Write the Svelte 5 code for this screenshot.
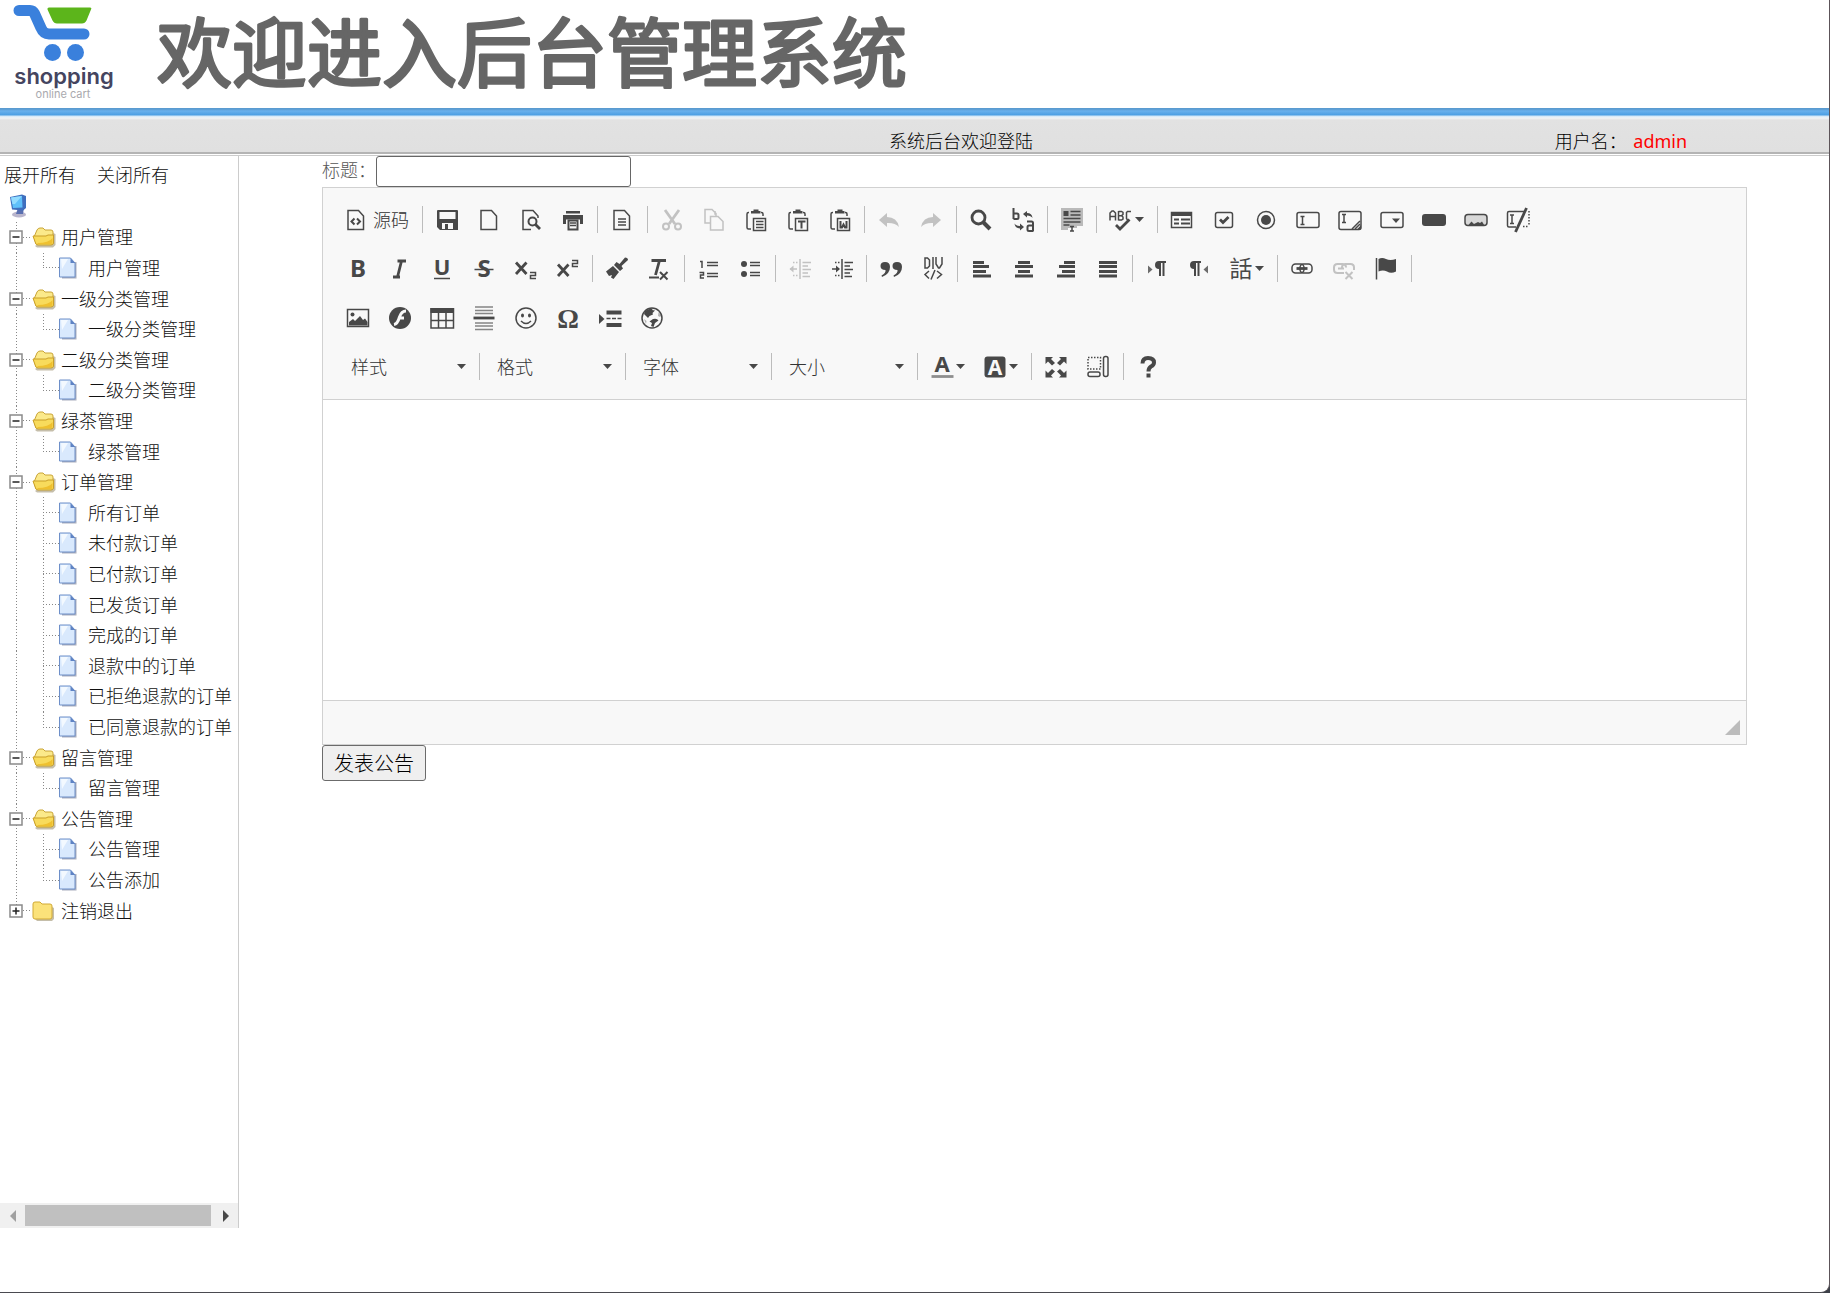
<script lang="ts">
  type Leaf = string;
  let groups = $state([
    { name: '用户管理', open: true, items: ['用户管理'] as Leaf[] },
    { name: '一级分类管理', open: true, items: ['一级分类管理'] },
    { name: '二级分类管理', open: true, items: ['二级分类管理'] },
    { name: '绿茶管理', open: true, items: ['绿茶管理'] },
    {
      name: '订单管理',
      open: true,
      items: ['所有订单', '未付款订单', '已付款订单', '已发货订单', '完成的订单', '退款中的订单', '已拒绝退款的订单', '已同意退款的订单']
    },
    { name: '留言管理', open: true, items: ['留言管理'] },
    { name: '公告管理', open: true, items: ['公告管理', '公告添加'] },
    { name: '注销退出', open: false, items: [] as Leaf[] }
  ]);

  function setAll(open: boolean) {
    groups.forEach((g) => (g.open = open));
  }

  // "-" separates buttons, "|" separates groups, "*" marks a disabled button, "+" one with a menu
  const rows = [
    'source - save newpage preview print - templates | *cut *copy paste pastetext pasteword - *undo *redo | find replace - selectall - +spell | form checkbox radio textfield textarea select button imagebutton hidden',
    'bold italic underline strike sub sup - brush removeformat | ol ul - *outdent indent - quote div - left center right justify - ltr rtl +language | link *unlink anchor |',
    'image flash table hr smiley omega pagebreak iframe'
  ].map((r) => r.split(' '));

  const combos = ['样式', '格式', '字体', '大小'];
  const lastRow = '+textcolor +bgcolor | maximize blocks | about'.split(' ');

  const labels: Record<string, string> = {
    save: '保存', newpage: '新建', preview: '预览', print: '打印', templates: '模板', cut: '剪切', copy: '复制',
    paste: '粘贴', pastetext: '粘贴为无格式文本', pasteword: '从 MS Word 粘贴', undo: '撤消', redo: '重做', find: '查找',
    replace: '替换', selectall: '全选', spell: '拼写检查', form: '表单', checkbox: '复选框', radio: '单选按钮',
    textfield: '单行文本', textarea: '多行文本', select: '列表', button: '按钮', imagebutton: '图像按钮', hidden: '隐藏域',
    bold: '加粗', italic: '倾斜', underline: '下划线', strike: '删除线', sub: '下标', sup: '上标', brush: '复制格式',
    removeformat: '清除格式', ol: '编号列表', ul: '项目列表', outdent: '减少缩进', indent: '增加缩进', quote: '块引用',
    div: '创建 DIV', left: '左对齐', center: '居中', right: '右对齐', justify: '两端对齐', ltr: '从左到右', rtl: '从右到左',
    language: '语言', link: '链接', unlink: '取消链接', anchor: '锚点', image: '图像', flash: 'Flash', table: '表格',
    hr: '水平线', smiley: '表情', omega: '特殊符号', pagebreak: '分页符', iframe: 'IFrame', textcolor: '文本颜色',
    bgcolor: '背景颜色', maximize: '全屏', blocks: '显示区块', about: '关于'
  };
</script>

{#snippet clipboard()}
  <path d="M5 4.500H4.500Q3 4.500 3 6V19.500Q3 21 4.500 21H7M17 4.500h.5Q19 4.500 19 6V8" class="s" />
  <path d="M7 5.500V3H9.500V1.500h5V3H16.500V5.500z" />
  <path d="M9.500 10.500h12v12h-12z" class="s" />
{/snippet}

{#snippet doc()}
  <path d="M4 2.500H14.500L19.500 8V21.500H4z" class="s" />
{/snippet}

{#snippet icon(name: string)}
  <svg class="icon" viewBox="0 0 24 24" aria-hidden="true">
    {#if name === 'source'}
      {@render doc()}
      <path d="M10.500 10.500L7.500 13.500L10.500 16.500M13 10.500L16 13.500L13 16.500" class="s w2" />
    {:else if name === 'save'}
      <path d="M2 3q0-1 1-1H22q1 0 1 1V22H5L2 19zM4.500 4v7H20.500V4zM7 15v6h3V16h3v5h5V15z" fill-rule="evenodd" />
    {:else if name === 'newpage'}
      {@render doc()}
    {:else if name === 'preview'}
      <path d="M19 10V8L14 2.500H4V21.500H12" class="s" />
      <circle cx="13.500" cy="13.500" r="4" class="s w2" />
      <path d="M16.500 16.500L21 21" class="s w3" />
    {:else if name === 'print'}
      <path d="M5 3H19V5.500H5zM2 7H22V16H19V11.500H5V16H2z" />
      <path d="M7.500 12.500h9v9h-9z" class="s w2" />
      <path d="M9 15h6M9 17.500h6" class="s" />
    {:else if name === 'templates'}
      {@render doc()}
      <path d="M8 11h8M8 14h8M8 17h8" class="s" />
    {:else if name === 'cut'}
      <path d="M5 2L15 16M19 2L9 16" class="s w3" />
      <circle cx="6" cy="18.500" r="3" class="s w2" />
      <circle cx="18" cy="18.500" r="3" class="s w2" />
    {:else if name === 'copy'}
      <path d="M8 15H3V1.500H10L14 5.500V8M13 3V6H14" class="s" />
      <path d="M8.500 8.500H16L21 13.500V22H8.500z" class="s" />
    {:else if name === 'paste'}
      {@render clipboard()}
      <path d="M12 13.500h7.500M12 16.500h7.500M12 19.500h7.500" class="s" />
    {:else if name === 'pastetext'}
      {@render clipboard()}
      <path d="M12 13.500h7.500M15.500 13.500V20.500" class="s w2" />
    {:else if name === 'pasteword'}
      {@render clipboard()}
      <path d="M12.500 13V19.500H14L15.500 16.500L17 19.500H18.500V13" class="s w2" />
    {:else if name === 'undo'}
      <path d="M10 5V9Q20 9 22 19Q18 14.500 10 15V19L2 12z" />
    {:else if name === 'redo'}
      <path d="M14 5V9Q4 9 2 19Q6 14.500 14 15V19L22 12z" />
    {:else if name === 'find'}
      <circle cx="9.500" cy="9.500" r="6.500" class="s w3" />
      <path d="M14.500 14.500L21 21" class="s w4" />
    {:else if name === 'replace'}
      <path d="M2.500 0V11M2.500 5.500H6Q7.500 5.500 7.500 7V9.500Q7.500 11 6 11H2.500M16 13.500h4.500Q22 13.500 22 15V23.500M22 17.500H18Q16.500 17.500 16.500 19V21.500Q16.500 23 18 23H22" class="s w2" />
      <path d="M12 6L16 3V5Q21 5 21.500 10Q20 7.500 16 7.500V9.500zM13 19L9 22.500V20.500Q4 20 3.500 15.500Q5 18 9 18V15.500z" />
    {:else if name === 'selectall'}
      <path d="M1 0H23V18H17V20H8V22H1z" opacity=".35" />
      <path d="M3.500 3h5v5h-5z" />
      <path d="M10.500 3.500H20.500M10.500 7H20.500M3.500 10.500H20.500M3.500 14H20.500M3.500 17H9.500M10 18.500h4M10 23h4M12 18v5" class="s" />
    {:else if name === 'spell'}
      <path d="M1 12.500V5L3 3H4.500L6.500 5V12.500M1 8.500H6.500M9.500 3V12.500M9.500 3.500h3l1.500 1v2l-1.500 1.200h-3h3l1.500 1.300v2l-1.500 1h-3M22 3.500H18.500L17.500 4.500V10.500L18.500 12H20" class="s" />
      <path d="M7 17L11 21L20.500 11.500" class="s w3" />
    {:else if name === 'form'}
      <path d="M1.500 4.500h20v15h-20z" class="s" />
      <path d="M1 4H22V8H1zM4 10.500H9V12.500H4zM4 14.500H9V16.500H4zM11 10.500H20V12.500H11zM11 14.500H20V16.500H11z" />
    {:else if name === 'checkbox'}
      <rect x="3.500" y="4.500" width="17" height="15" rx="2" class="s" />
      <path d="M8 11.500L11 14.500L16.500 9" class="s w3" />
    {:else if name === 'radio'}
      <circle cx="12" cy="12" r="8.500" class="s" />
      <circle cx="12" cy="12" r="5" />
    {:else if name === 'textfield'}
      <rect x="1" y="4.500" width="22" height="15" rx="2" class="s" />
      <path d="M4.500 8.500h4M4.500 16.500h4M6.500 8.500v8" class="s" />
    {:else if name === 'textarea'}
      <rect x="1" y="3.500" width="22" height="18" rx="2" class="s" />
      <path d="M4 6.500h4M4 14.500h4M6 6.500v8M14 21L22 13M17 21L22 16" class="s" />
      <path d="M19 21.500H23V17z" />
    {:else if name === 'select'}
      <rect x="1" y="4.500" width="22" height="15" rx="2" class="s" />
      <path d="M12 10.500H20L16 15z" />
    {:else if name === 'button'}
      <rect x="0" y="6" width="24" height="12" rx="3" />
    {:else if name === 'imagebutton'}
      <rect x="1" y="6.500" width="22" height="11" rx="3" fill="#d8d8d8" class="line" />
      <path d="M4 17.500L7.500 13.500L10 16L14 14L16 15L18 13.500L20.500 17.500z" />
    {:else if name === 'hidden'}
      <path d="M18 3.500H3Q1.500 3.500 1.500 5V17.500Q1.500 19 3 19H10M4 7h4M4 15.500h4M6 7v8.500" class="s" />
      <path d="M17 18.500H23M23 3V18" class="s dots" />
      <path d="M20.500 0L9.500 24" class="s w3" />
    {:else if name === 'bold'}
      <text x="12" y="20" text-anchor="middle" class="b" font-size="24">B</text>
    {:else if name === 'italic'}
      <path d="M9.500 4H18M5 20H12M13.500 4L9.500 20" class="s w3" />
    {:else if name === 'underline'}
      <text x="12" y="18" text-anchor="middle" class="b" font-size="22">U</text>
      <path d="M4 21.500H20" class="s" />
    {:else if name === 'strike'}
      <text x="12" y="20" text-anchor="middle" class="b" font-size="24">S</text>
      <path d="M2.500 12.500H21.500" class="s" />
    {:else if name === 'sub'}
      <path d="M2 5.500L12.500 17M12.500 5.500L2 17" class="s w3" />
      <path d="M16 15.500H21.500V18.500H16.500V21.500H22" class="s" />
    {:else if name === 'sup'}
      <path d="M2 7.500L12.500 19M12.500 7.500L2 19" class="s w3" />
      <path d="M16 3.500H21.500V6.500H16.500V9.500H22" class="s" />
    {:else if name === 'brush'}
      <path d="M20 0.500Q23 .5 23 3L16.500 9L18 11.500L15 14L9 8L11.500 5L14.500 7zM8 9L14 15L8.500 22L6 20.500L7 18L4 19L1 14.500z" />
    {:else if name === 'removeformat'}
      <path d="M4.500 3.500H19M12.500 3.500L8.500 18" class="s w3" />
      <path d="M2 20.500H12M13 15L20.500 22.500M20.500 15L13 22.500" class="s w2" />
    {:else if name === 'ol'}
      <path d="M3 4.500H5V11M2.500 15.500H6.500V18H3.500V21H7M10 5.500H21M10 8.500H21M10 16.500H21M10 19.500H21" class="s" />
    {:else if name === 'ul'}
      <circle cx="5" cy="7" r="3" /><circle cx="5" cy="17" r="3" />
      <path d="M11 5.500H21M11 8.500H21M11 15.500H21M11 18.500H21" class="s" />
    {:else if name === 'outdent' || name === 'indent'}
      <path d="M12 2V22M14.500 5.500H23M14.500 9H20M14.500 12.500H23M14.500 16H20M14.500 19.500H22M2 12H9" class="s" />
      <path d="M5 5.500H10M5 18.500H10" class="s dots" />
      {#if name === 'indent'}<path d="M6 8.500L10 12L6 15.500z" />{:else}<path d="M5.500 8.500L1.500 12L5.500 15.500z" />{/if}
    {:else if name === 'quote'}
      <path d="M6 5Q11 5 11 10Q11 17 3 20L2.500 18.500Q7 16 6.500 13Q1.500 13 1.500 9Q1.500 5 6 5zM18 5Q23 5 23 10Q23 17 15 20L14.500 18.500Q19 16 18.500 13Q13.500 13 13.500 9Q13.500 5 18 5z" />
    {:else if name === 'div'}
      <path d="M4 1V11H6.500L8.500 9V3L6.500 1zM12 0V12M15 0V7L17.500 11H18.500L21 7V0M8 14L4 17.500L8 21.500M16 14L20.500 17.500L16 21.500M14 13L10 22.500" class="s" />
    {:else if name === 'left'}
      <path d="M3 5.500H14M3 9.500H19M3 14.500H16M3 19H21" class="s w3" />
    {:else if name === 'center'}
      <path d="M6 5.500H18M3 9.500H21M6 14.500H18M3 19H21" class="s w3" />
    {:else if name === 'right'}
      <path d="M10 5.500H21M5 9.500H21M8 14.500H21M3 19H21" class="s w3" />
    {:else if name === 'justify'}
      <path d="M3 5.500H21M3 9.500H21M3 14.500H21M3 19H21" class="s w3" />
    {:else if name === 'ltr'}
      <path d="M3 8.500L7.500 12.500L3 16.500z" opacity=".8" />
      <path d="M21 4H14Q10 4 10 8Q10 12 14 12V19H16V6H17.500V19H19.500V6H21z" />
    {:else if name === 'rtl'}
      <path d="M21 8.500L16.500 12.500L21 16.500z" opacity=".8" />
      <path d="M14 4H7Q3 4 3 8Q3 12 7 12V19H9V6H10.500V19H12.500V6H14z" />
    {:else if name === 'language'}
      <text x="12" y="20" text-anchor="middle" class="cjk" font-size="23">話</text>
    {:else if name === 'link'}
      <rect x="2" y="7" width="12" height="9" rx="3.500" class="s" /><rect x="10" y="7" width="12" height="9" rx="3.500" class="s" />
      <path d="M6.500 11.500H17.500" class="s w3" />
    {:else if name === 'unlink'}
      <path d="M12 16H5.500Q2 16 2 12.500V10.500Q2 7 5.500 7H10.500Q14 7 14 10.500M10 12.500V10.500Q10 7 13.500 7H18.500Q22 7 22 10.500V13M6 11.500H12" class="s w2" />
      <path d="M13.500 15L20.500 22M20.500 15L13.500 22" class="s w2" />
    {:else if name === 'anchor'}
      <path d="M2.500 1V22.500" class="s" />
      <path d="M4.500 2Q8 0 12 2Q16 4 22 2V14.500Q17 17 13 14.500Q9 12.500 4.500 14.500z" />
    {:else if name === 'image'}
      <path d="M1.500 3.500h21v17h-21z" class="s" />
      <circle cx="6.500" cy="8.500" r="2" />
      <path d="M3 19.500V16L7 13L9 15L14 10L17 14L19 12.500L21.500 16V19.500z" />
    {:else if name === 'flash'}
      <circle cx="12" cy="12" r="11" />
      <path d="M18 5Q13.500 5 11.500 11Q9.500 18 6 18.500M11 12H16" fill="none" stroke="#f8f8f8" stroke-width="3" />
    {:else if name === 'table'}
      <path d="M.5 2H24V7H.5z" />
      <path d="M1 2V22H23.500V2M1 14.500H23.500M8.500 7V22M16 7V22" class="s" />
    {:else if name === 'hr'}
      <path d="M3 1H21M3 4.500H21M3 7.500H21M3 17H21M3 20H21M3 23.500H21" class="s" opacity=".65" />
      <path d="M1.500 12H22.500" class="s w3" />
    {:else if name === 'smiley'}
      <circle cx="12" cy="12" r="10" class="s" />
      <ellipse cx="8.500" cy="9.500" rx="1.500" ry="2" /><ellipse cx="15.500" cy="9.500" rx="1.500" ry="2" />
      <path d="M7 15Q12 20 17 15" class="s" />
    {:else if name === 'omega'}
      <text x="12" y="22" text-anchor="middle" class="serif" font-size="27">Ω</text>
    {:else if name === 'pagebreak'}
      <path d="M1 8L6.500 13L1 18z" />
      <path d="M8.500 4.500H23.500V8.500H8.500zM8.500 17H23.500V21H8.500z" />
      <path d="M8.500 12.500H23.500" class="s" stroke-dasharray="4 1.500" />
    {:else if name === 'iframe'}
      <circle cx="12" cy="12" r="10" class="s" />
      <path d="M5 5Q9 2 13 2.500L12 4L15 4.500L12.500 7L13 8.500L9.500 10L8 12L4 8zM13 13Q17 12 18.500 14.500L15 17L13.500 21L11 20L12 17L9.500 15.500z" />
      <path d="M18.500 6L21 9L20 11L18 10zM4 13L6.500 15L6 18z" opacity=".4" />
    {:else if name === 'textcolor'}
      <text x="12" y="17" text-anchor="middle" class="b" font-size="22">A</text>
      <path d="M1.500 21.500H23.500" class="s w3" opacity=".6" />
    {:else if name === 'bgcolor'}
      <rect x="1.500" y="1.500" width="21" height="21" rx="3" />
      <text x="12" y="19.500" text-anchor="middle" class="b light" font-size="21">A</text>
    {:else if name === 'maximize'}
      <path d="M1.500 2H9L7 4L11 8L8 10.500L4 6.500L1.500 9zM22.500 2H15L17 4L13 8L16 10.500L20 6.500L22.500 9zM1.500 22.500H9L7 20.500L11 16.500L8 14L4 18L1.500 15.500zM22.500 22.500H15L17 20.500L13 16.500L16 14L20 18L22.500 15.500z" />
    {:else if name === 'blocks'}
      <path d="M2 2.500H14.500V14H2z" class="s dots" />
      <rect x="17.500" y="1.500" width="4.500" height="20" rx="2" class="s" />
      <rect x="2" y="17" width="12" height="4.500" rx="2" class="s" />
    {:else if name === 'about'}
      <path d="M6.500 8.500Q6.500 3 12 3Q18 3 18 7.500Q18 10 15 11.500Q12.500 13 12.500 16.500" class="s w4" />
      <rect x="10.500" y="18.500" width="4" height="4" />
    {/if}
  </svg>
{/snippet}

{#snippet caret()}
  <svg class="caret" viewBox="0 0 9 5" aria-hidden="true"><path d="M0 0H9L4.500 5z" /></svg>
{/snippet}

{#snippet tool(token: string)}
  {#if token === '-'}
    <span class="sep"></span>
  {:else if token === '|'}
    <span class="sep wide"></span>
  {:else if token === 'source'}
    <button class="tool source" type="button">{@render icon('source')}<span>源码</span></button>
  {:else}
    {@const name = token.replace(/^[*+]/, '')}
    <button class="tool" type="button" aria-label={labels[name]} disabled={token[0] === '*'}>
      {@render icon(name)}
      {#if token[0] === '+'}{@render caret()}{/if}
    </button>
  {/if}
{/snippet}

<div class="page">
  <header>
    <div class="brand">
      <svg class="logo" viewBox="0 0 120 108" role="img" aria-label="shopping online cart">
        <path d="M19 10.500H30Q33 10.500 34.500 13.500L41 28Q43.500 34 49 34H84" fill="none" stroke="#3a80dc" stroke-width="11" stroke-linecap="round" stroke-linejoin="round" />
        <path d="M49 7.500H90Q92 7.500 91 9.500L86.500 20.500Q85 23.500 82 23.500H57Q54 23.500 52.500 20.500L47.500 9.500Q47 7.500 49 7.500z" fill="#5cb51b" />
        <circle cx="52.500" cy="52.500" r="8.500" fill="#3a80dc" />
        <circle cx="75.500" cy="52.500" r="8.500" fill="#3a80dc" />
        <text x="64" y="84" text-anchor="middle" class="shop">shopping</text>
        <text x="63" y="98" text-anchor="middle" class="online">online cart</text>
      </svg>
      <h1>
        <svg class="title" viewBox="0 0 780 108"><text x="10" y="81">欢迎进入后台管理系统</text></svg>
      </h1>
    </div>
    <div class="bar">
      <span></span>
      <span>系统后台欢迎登陆</span>
      <span class="user">用户名： <b>admin</b></span>
    </div>
  </header>

  <div class="body">
    <aside>
      <div class="side">
        <div class="switches">
          <button type="button" onclick={() => setAll(true)}>展开所有</button>
          <button type="button" onclick={() => setAll(false)}>关闭所有</button>
        </div>
        <svg class="pc" viewBox="0 0 18 24" aria-hidden="true">
          <ellipse cx="10" cy="20.500" rx="7" ry="3" fill="#b9b5cc" />
          <path d="M9 14L15 13L14 20L7 20z" fill="#5a6fb0" />
          <path d="M1 3L13 .5L17 2V14L14 16.500L3 15.500z" fill="#3f6fbe" />
          <path d="M2 3.500L13 2L13.500 13.500L4 14z" fill="#5fc0fa" />
          <path d="M2 3.500L13 2L6 10L3.500 10z" fill="#93dcff" />
        </svg>
        <ul class="tree">
          {#each groups as g, i}
            <li class="row">
              <button class="fold" class:last={i === groups.length - 1} type="button" aria-label={g.name} aria-expanded={g.open} onclick={() => (g.open = !g.open)}>
                <svg viewBox="0 0 14 14" aria-hidden="true">
                  <rect x="1" y="1" width="12" height="12" fill="#fff" stroke="#8a8a8a" stroke-width="1.500" />
                  <path d={g.open ? 'M3.500 7H10.500' : 'M3.500 7H10.500M7 3.500V10.500'} stroke="#222" stroke-width="1.500" />
                </svg>
              </button>
              <svg class="folder" viewBox="0 0 24 22" aria-hidden="true">
                {#if g.open}
                  <path d="M3 20L5 21.500H21L23.500 19V8L21 7z" fill="#8b7d55" opacity=".5" />
                  <path d="M2 11L5 4Q6 2 8 2H11L13 4H19Q21 4 21 6V18H4z" fill="#fbe98a" stroke="#c9a437" />
                  <path d="M1 10H14L16 9H21.500V17Q21 19 19 19H6Q4 19 3.500 17z" fill="#f8db5c" stroke="#c99f28" />
                  <path d="M6 18H19Q20.500 18 20.500 16V12Q17 17 5 17z" fill="#efc02f" />
                {:else}
                  <path d="M3 19L5 21H20L22 19V8L20 7z" fill="#8b7d55" opacity=".5" />
                  <path d="M1 4Q1 2 3 2H8L10 4H18Q20 4 20 6V17Q20 19 18 19H3Q1 19 1 17z" fill="#fbe27a" stroke="#d1a935" />
                {/if}
              </svg>
              <a href="#group{i}">{g.name}</a>
            </li>
            {#if g.open}
              {#each g.items as item, k}
                <li class="row leaf">
                  <span class="trunk"></span>
                  <span class="branch" class:end={k === g.items.length - 1}></span>
                  <svg class="file" viewBox="0 0 18 22" aria-hidden="true">
                    <path d="M3 5H17.500V21.500H3z" fill="#6e7690" opacity=".6" />
                    <path d="M.5 1H11.500L16 6V20H.5z" fill="#d9e9fd" stroke="#6d8fc9" />
                    <path d="M2 2H9L3 12z" fill="#f3f9ff" />
                    <path d="M11.500 1V6H16z" fill="#5e83c4" />
                  </svg>
                  <a href="#item{i}-{k}">{item}</a>
                </li>
              {/each}
            {/if}
          {/each}
        </ul>
      </div>
      <div class="scrollbar">
        <button type="button" aria-label="向左滚动" disabled><svg viewBox="0 0 6 12"><path d="M6 0V12L0 6z" fill="#a0a0a0" /></svg></button>
        <div class="thumb"></div>
        <button type="button" aria-label="向右滚动"><svg viewBox="0 0 6 12"><path d="M0 0V12L6 6z" fill="#484848" /></svg></button>
      </div>
    </aside>

    <main>
      <form onsubmit={(e) => e.preventDefault()}>
        <div class="field">
          <label for="title">标题：</label>
          <input id="title" type="text" />
        </div>
        <div class="editor">
          <div class="toolbar">
            {#each rows as row}
              <div class="tools">
                {#each row as token}{@render tool(token)}{/each}
              </div>
            {/each}
            <div class="tools">
              {#each combos as c, i}
                <div class="combo">
                  <select aria-label={c}><option>{c}</option></select>
                  {@render caret()}
                </div>
                <span class="sep"></span>
              {/each}
              {#each lastRow as token}{@render tool(token)}{/each}
            </div>
          </div>
          <textarea aria-label="公告内容"></textarea>
          <div class="foot">
            <svg viewBox="0 0 15 15" aria-hidden="true"><path d="M15 0V15H0z" fill="#bcbcbc" /></svg>
          </div>
        </div>
        <button class="submit" type="submit">发表公告</button>
      </form>
    </main>
  </div>
</div>

<style>
  :global(body) {
    margin: 0;
    background: #3c4048;
  }
  .page {
    box-sizing: border-box;
    min-height: 100vh;
    display: flex;
    flex-direction: column;
    border-right: 1px solid #5c5459;
    border-bottom: 1px solid #4a4a50;
    border-bottom-right-radius: 9px;
    background: #fff;
    font: 300 18px/24px 'Noto Sans', 'Noto Sans CJK SC', sans-serif;
    color: #111;
  }
  button,
  input,
  select,
  textarea {
    font: inherit;
    color: inherit;
    margin: 0;
  }
  a {
    color: inherit;
    text-decoration: none;
  }

  .brand {
    display: flex;
    height: 108px;
  }
  .logo {
    width: 120px;
    height: 108px;
    flex: none;
  }
  .shop {
    font: 600 22px Inter, sans-serif;
    fill: #45455f;
  }
  .online {
    font: 400 11px Inter, sans-serif;
    fill: #a9a9ae;
  }
  h1 {
    margin: 0 0 0 27px;
  }
  .title {
    display: block;
    width: 780px;
    height: 108px;
    overflow: visible;
  }
  .title text {
    font: 400 75px 'Noto Sans CJK SC', sans-serif;
    fill: #666;
    stroke: #666;
    stroke-width: 3px;
    stroke-linejoin: round;
  }
  .bar {
    display: grid;
    grid-template-columns: 48.6% 36.4% auto;
    align-items: end;
    height: 44px;
    border-bottom: 2px solid #b4b4b4;
    background: linear-gradient(#5a9bd0 0 1px, #68b0ec 3px, #4b9ee2 7px, #cfe6f8 8px, #f2f4f5 10px, #e2e2e2 12px, #e0e0e0);
    color: #000;
    line-height: 22px;
  }
  .user b {
    margin-left: 2px;
    font-weight: 400;
    color: #f00;
  }

  .body {
    flex: 1;
    display: flex;
    margin-top: 1px;
    border-top: 1px solid #ccc;
  }
  aside {
    box-sizing: border-box;
    width: 239px;
    flex: none;
    display: flex;
    flex-direction: column;
    margin-bottom: 64px;
    border-right: 1px solid #ccc;
  }
  .side {
    flex: 1;
    overflow: hidden;
    white-space: nowrap;
  }
  .switches {
    display: flex;
    gap: 21px;
    padding: 7px 4px 0;
  }
  .switches button {
    padding: 0;
    border: 0;
    background: none;
    cursor: pointer;
  }
  .pc {
    display: block;
    width: 18px;
    height: 24px;
    margin: 7px 0 0 9px;
  }
  .tree {
    margin: 4px 0 0;
    padding: 0 0 0 9px;
    list-style: none;
    display: grid;
    grid-auto-rows: 1fr;
    height: 704px;
  }
  .row {
    display: flex;
    align-items: center;
  }
  .fold {
    display: flex;
    align-items: center;
    align-self: stretch;
    width: 23px;
    padding: 0;
    border: 0;
    background:
      repeating-linear-gradient(to right, #888 0 1px, transparent 1px 3px) 14px 50% / 9px 1px no-repeat,
      repeating-linear-gradient(#888 0 1px, transparent 1px 3px) 7px 0 / 1px 100% no-repeat;
  }
  .fold.last {
    background-size: 9px 1px, 1px 50%;
  }
  .fold svg {
    width: 14px;
    height: 14px;
  }
  .folder {
    width: 24px;
    height: 22px;
    margin-right: 5px;
  }
  .trunk {
    align-self: stretch;
    width: 27px;
    background: repeating-linear-gradient(#888 0 1px, transparent 1px 3px) 7px 0 / 1px 100% no-repeat;
  }
  .branch {
    align-self: stretch;
    width: 23px;
    background:
      repeating-linear-gradient(to right, #888 0 1px, transparent 1px 3px) 7px 50% / 16px 1px no-repeat,
      repeating-linear-gradient(#888 0 1px, transparent 1px 3px) 7px 0 / 1px 100% no-repeat;
  }
  .branch.end {
    background-size: 16px 1px, 1px 50%;
  }
  .file {
    width: 18px;
    height: 22px;
    margin-right: 11px;
  }
  .scrollbar {
    display: flex;
    align-items: stretch;
    height: 25px;
    background: #f0f0f0;
  }
  .scrollbar button {
    display: flex;
    align-items: center;
    justify-content: center;
    width: 25px;
    padding: 0;
    border: 0;
    background: none;
  }
  .scrollbar svg {
    width: 6px;
    height: 12px;
  }
  .thumb {
    width: 186px;
    margin: 2px 2px 2px 0;
    background: #c0c0c0;
  }

  main {
    flex: 1;
    padding: 0 82px 0 83px;
  }
  .field {
    display: flex;
    height: 31px;
    color: #555;
  }
  .field label {
    width: 54px;
    line-height: 28px;
    white-space: nowrap;
  }
  .field input {
    box-sizing: border-box;
    width: 255px;
    border: 1px solid #666;
    border-radius: 3px;
    background: #fff;
  }
  .editor {
    border: 1px solid #d1d1d1;
  }
  .toolbar {
    padding: 7px 14px 8px;
    border-bottom: 1px solid #d1d1d1;
    background: #f8f8f8;
  }
  .tools {
    display: flex;
    flex-wrap: wrap;
    align-items: center;
    min-height: 49px;
  }
  .tool {
    display: flex;
    align-items: center;
    gap: 2px;
    height: 42px;
    padding: 0 9px;
    border: 0;
    background: none;
    color: #333;
  }
  .tool:not(:disabled):hover {
    background: #e5e5e5;
  }
  .tool:disabled {
    opacity: .3;
  }
  .source {
    gap: 5px;
    padding: 0 10px 0 7px;
  }
  .icon {
    display: block;
    width: 24px;
    height: 24px;
    overflow: visible;
    fill: #484848;
  }
  .icon .s {
    fill: none;
    stroke: #484848;
    stroke-width: 1.5;
  }
  .icon .line {
    stroke: #484848;
    stroke-width: 1.5;
  }
  .icon .w2 {
    stroke-width: 2;
  }
  .icon .w3 {
    stroke-width: 2.8;
  }
  .icon .w4 {
    stroke-width: 4;
  }
  .icon .dots {
    stroke-dasharray: 1.5 1.5;
  }
  .icon .b {
    font-family: 'Noto Sans', sans-serif;
    font-weight: 700;
  }
  .icon .light {
    fill: #f8f8f8;
  }
  .icon .cjk {
    font-family: 'Noto Sans CJK TC', sans-serif;
    font-weight: 400;
  }
  .icon .serif {
    font-family: 'Liberation Serif', serif;
    font-weight: 700;
  }
  .caret {
    width: 9px;
    height: 5px;
    fill: #484848;
  }
  .sep {
    width: 1px;
    height: 27px;
    margin: 0 3px;
    background: #bcbcbc;
  }
  .sep.wide {
    margin: 0 3px 0 4px;
  }
  .combo {
    display: flex;
    align-items: center;
    width: 139px;
  }
  .combo select {
    appearance: none;
    flex: 1;
    height: 42px;
    margin-right: -24px;
    padding: 0 24px 0 14px;
    border: 0;
    background: transparent;
    color: #333;
  }
  .combo .caret {
    margin-right: 10px;
    pointer-events: none;
  }
  .editor textarea {
    display: block;
    box-sizing: border-box;
    width: 100%;
    height: 300px;
    padding: 20px;
    border: 0;
    outline: 0;
    resize: none;
    background: #fff;
  }
  .foot {
    display: flex;
    justify-content: flex-end;
    align-items: flex-end;
    height: 43px;
    padding-right: 6px;
    border-top: 1px solid #d1d1d1;
    background: #f8f8f8;
  }
  .foot svg {
    width: 15px;
    height: 15px;
    margin-bottom: 9px;
  }
  .submit {
    display: block;
    height: 36px;
    padding: 2px 11px 0;
    border: 1px solid #6b6b6b;
    border-radius: 3px;
    background: #efefef;
    color: #000;
    font-size: 20px;
  }
</style>
